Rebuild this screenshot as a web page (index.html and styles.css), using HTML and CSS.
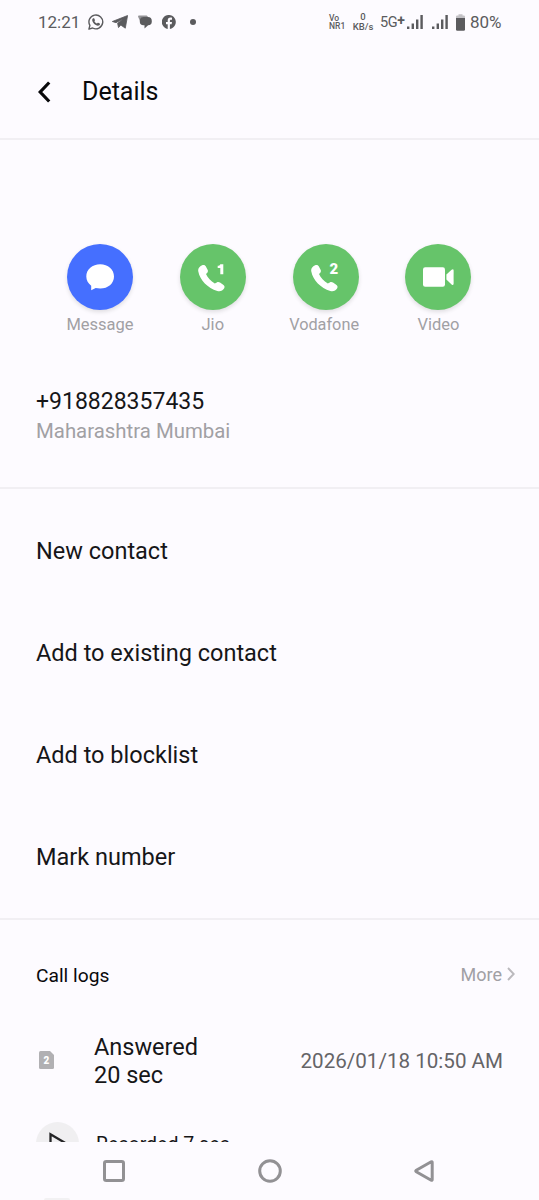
FILE: index.html
```html
<!DOCTYPE html>
<html lang="en">
<head>
<meta charset="utf-8">
<title>Details</title>
<link rel="stylesheet" href="styles.css">
</head>
<body>
<div class="phone">
  <div class="status">
    <span class="clock">12:21</span>
    <svg class="s-wa" width="16" height="16" viewBox="0 0 16 16"><path d="M.9 15.100l1-3.700A6.900 6.900 0 1 1 4.600 14z" fill="none" stroke="currentColor" stroke-width="1.400" stroke-linejoin="round"/><path d="M5.500 4.200c-.5 0-1.300.6-1.300 1.800 0 2.300 3 5.500 5.700 5.800 1.300 0 2.100-.8 2.100-1.700 0-.3-.1-.5-.3-.6L10.200 8.700c-.3-.1-.5 0-.7.3l-.5.6c-.9-.3-2.100-1.400-2.600-2.400l.5-.7c.1-.2.1-.4 0-.6l-.6-1.400c-.1-.2-.4-.3-.8-.3z" fill="currentColor"/></svg>
    <svg class="s-tg" width="16" height="14" viewBox="0 0 16 14"><path d="M15.600.5L13.300 13.200 8.800 10.100 6.500 12.600 5.600 8.300 11.500 3.800 4 7.700.3 6.500z" fill="currentColor" stroke="currentColor" stroke-width=".8" stroke-linejoin="round"/></svg>
    <svg class="s-ms" width="14" height="14" viewBox="0 0 14 14"><path d="M1.200.6h7.500l2 1.900H5.500C3.300 2.500 2.200 4 2 6L.2 2.100C-.1 1.300.3.6 1.200.6z" fill="#939296"/><path d="M5.500 2h4.400a3.900 3.900 0 0 1 3.900 3.900v.5a3.900 3.900 0 0 1-3.700 3.900L6.500 13.500V10.300h-1a3.900 3.900 0 0 1-3.700-3.900v-.5A3.900 3.900 0 0 1 5.500 2z" fill="currentColor"/></svg>
    <svg class="s-fb" width="14" height="14" viewBox="0 0 14 14"><path d="M5.700 13.900V9.200H4V7.100h1.700V5.700c0-2 1-3.100 2.800-3.100.6 0 1.200.1 1.500.2v1.900H9c-.8 0-1.100.4-1.100 1.100v1.300H10l-.4 2.100H7.900v4.700A7 7 0 1 0 5.700 13.900z" fill="currentColor"/></svg>
    <i class="more-dot"></i>
    <div class="stack volte"><span>Vo</span><span>NR1</span></div>
    <div class="stack speed"><span>0</span><span>KB/s</span></div>
    <span class="net">5G<b>+</b></span>
    <svg class="sig sig-a" width="16" height="14" viewBox="0 0 16 14"><path d="M0 11.500h2.400V14H0zM4.600 8.500H7V14H4.600zM9 4.500h2.400V14H9zM13.400 0h2.400v14h-2.400z" fill="currentColor"/></svg>
    <svg class="sig sig-b" width="16" height="14" viewBox="0 0 16 14"><path d="M0 11.500h2.400V14H0zM4.600 8.500H7V14H4.600zM9 4.500h2.400V14H9zM13.400 0h2.400v14h-2.400z" fill="currentColor"/></svg>
    <svg class="bat" width="9" height="17" viewBox="0 0 9 17"><path d="M0 4V2.700Q0 1.500 1.200 1.500H2.500V.3h4v1.200h1.300Q9 1.500 9 2.700V4z" fill="#c3c2c6"/><path d="M0 4h9v11.500q0 1.300-1.300 1.300H1.300Q0 16.800 0 15.500z" fill="currentColor"/></svg>
    <span class="pct">80%</span>
  </div>

  <header class="header">
    <svg width="13" height="22" viewBox="0 0 13 22"><path d="M11.200 1.500L2.200 11l9 9.500" fill="none" stroke="currentColor" stroke-width="3.200"/></svg>
    <h1>Details</h1>
  </header>

  <div class="actions">
    <div class="action">
      <div class="disc blue"><svg width="66" height="66" viewBox="0 0 66 66"><path d="M33.200 20.300c7.800 0 13.800 5.200 13.800 12.200s-6 12.100-13.800 12.100c-1.700 0-3.100-.2-4.500-.5l-4.500 2.100V41.700c-3-2.200-4.900-5.400-4.900-9.200 0-7 6.100-12.200 13.900-12.200z" fill="#fff"/></svg></div>
      <span>Message</span>
    </div>
    <div class="action">
      <div class="disc"><svg width="66" height="66" viewBox="0 0 66 66"><use href="#handset"/><path d="M40.300 20.300h3v10h-3v-6.300h-2.600v-2.200c1.400 0 2.200-.5 2.600-1.500z" fill="#fff"/></svg></div>
      <span>Jio</span>
    </div>
    <div class="action">
      <div class="disc"><svg width="66" height="66" viewBox="0 0 66 66"><path id="handset" d="M22.700 21.100c1-.5 2.300 0 2.900 1l2 3.600c.6 1.100.3 2.300-.5 3.200l-1.100 1.200c1.700 4 4.800 7.100 8.800 9.400l2-1.100c1-.6 2.200-.5 3.200.2l3.500 2.500c1.100.8 1.400 2.100.7 3.200-1.500 2.500-4 3.500-6.900 2.700-9.500-3-17.400-11-19-19.600-.5-2.900 1.500-5.200 4.400-6.300z" fill="#fff"/></svg><b class="sim">2</b></div>
      <span class="voda">Vodafone</span>
    </div>
    <div class="action">
      <div class="disc"><svg width="66" height="66" viewBox="0 0 66 66"><rect x="18" y="23.200" width="22" height="19.600" rx="2.200" fill="#fff"/><path d="M41.400 30.500l5.200-4.800q2-1.400 2 .9v13q0 2.200-2 .8l-5.200-4.800z" fill="#fff"/></svg></div>
      <span>Video</span>
    </div>
  </div>

  <section class="number">
    <div class="tel">+918828357435</div>
    <div class="place">Maharashtra Mumbai</div>
  </section>

  <nav class="menu">
    <div class="item">New contact</div>
    <div class="item">Add to existing contact</div>
    <div class="item">Add to blocklist</div>
    <div class="item">Mark number</div>
  </nav>

  <section class="logs">
    <div class="logs-head">
      <span class="title">Call logs</span>
      <span class="more">More</span>
      <svg class="chev" width="8" height="14" viewBox="0 0 8 14"><path d="M1 1l5.700 6L1 13" fill="none" stroke="#bbb9bd" stroke-width="1.900"/></svg>
    </div>
    <div class="log">
      <svg class="card" width="15" height="18" viewBox="0 0 15 18"><path d="M1.500 0H11l4 4v12.500q0 1.500-1.500 1.500h-12Q0 18 0 16.500v-15Q0 0 1.500 0z" fill="#b1b0b3"/><text x="7.500" y="12.900" text-anchor="middle">2</text></svg>
      <div class="result"><span>Answered</span><span>20 sec</span></div>
      <time>2026/01/18 10:50 AM</time>
    </div>
    <div class="recording">
      <div class="play"><svg width="44" height="44" viewBox="0 0 44 44"><path d="M14.500 12.300v19.400L31 22z" fill="none" stroke="#242426" stroke-width="2.300"/></svg></div>
      <span>Recorded 7 sec</span>
    </div>
  </section>

  <footer class="sysnav">
    <svg width="22" height="22" viewBox="0 0 22 22"><rect x="1.500" y="1.500" width="19" height="19" rx="1.800"/></svg>
    <svg width="24" height="24" viewBox="0 0 24 24"><circle cx="12" cy="12" r="10.300"/></svg>
    <svg width="20" height="22" viewBox="0 0 20 22"><path d="M17.200 1.800Q18.200 1.300 18.200 2.500v17q0 1.200-1 .7L2.300 11.800q-1.200-.8 0-1.600z"/></svg>
    <i class="peek"></i>
  </footer>
</div>
</body>
</html>
```
FILE: styles.css
```css
* { box-sizing: border-box; }
body { margin: 0; background: #fdfbff; font-family: Roboto, "Liberation Sans", sans-serif; color: #161618; }
.phone { width: 539px; height: 1200px; overflow: hidden; display: flex; flex-direction: column; background: #fdfbff; }
.phone > * { flex: none; }
svg { display: block; flex: none; }
span, time, h1 { white-space: nowrap; }

.status { height: 44px; display: flex; align-items: center; padding-left: 38px; color: #5b5b5e; }
.clock { width: 50px; font-size: 17px; }
.s-tg { margin-left: 8px; }
.s-ms { margin-left: 10px; }
.s-fb { margin-left: 10px; }
.more-dot { width: 6px; height: 6px; border-radius: 50%; background: currentColor; margin-left: 14px; }
.stack { display: flex; flex-direction: column; font-weight: 500; }
.volte { width: 17px; margin-left: 133px; font-size: 8.500px; line-height: 8px; }
.speed { width: 22px; margin-left: 6px; align-items: center; font-size: 9.500px; line-height: 10px; }
.net { width: 25px; margin-left: 6px; font-size: 14.500px; letter-spacing: -.4px; }
.net b { font-size: 14px; position: relative; top: -2px; }
.sig-a { margin-left: 2px; }
.sig-b { margin-left: 9px; }
.bat { margin-left: 8px; }
.pct { margin-left: 5px; font-size: 17px; }

.header { height: 96px; display: flex; align-items: center; gap: 31px; padding: 2px 0 0 38px; border-bottom: 2px solid #f1eff3; color: #09090b; }
.header h1 { margin: 0; font-size: 25px; font-weight: 400; line-height: 30px; }

.actions { height: 210px; padding: 104px 44px 0 43.600px; display: flex; }
.action { width: 112.800px; display: flex; flex-direction: column; align-items: center; font-size: 16.500px; line-height: 20px; color: #a1a0a4; }
.action span { margin-top: 5px; }
.action .voda { margin-right: 3px; font-size: 16.300px; }
.disc { position: relative; width: 66px; height: 66px; border-radius: 50%; background: #66c46a; box-shadow: 0 2px 4px rgba(0, 0, 0, .12); }
.disc.blue { background: #456fff; }
.sim { position: absolute; left: 37px; top: 17px; font-size: 15px; line-height: 17px; font-weight: 900; color: #fff; }

.number { height: 139px; padding-top: 37px; border-bottom: 2px solid #f1eff3; padding-left: 36px; }
.tel { font-size: 23px; line-height: 30px; }
.place { font-size: 20.400px; line-height: 28px; color: #a1a0a4; }

.menu { height: 431px; padding: 11px 0 0 36px; border-bottom: 2px solid #f1eff3; }
.item { height: 102px; display: flex; align-items: center; font-size: 23.500px; }

.logs { height: 222px; overflow: hidden; }
.logs-head { height: 110px; display: flex; align-items: center; padding: 0 24px 0 36px; }
.title { font-size: 19.200px; color: #09090b; }
.more { margin-left: auto; margin-right: 5px; margin-bottom: 2px; font-size: 18px; color: #a1a0a4; }
.chev { margin-bottom: 3px; }
.log { height: 62px; display: flex; align-items: center; padding: 0 36px 0 39px; }
.card { margin-top: -3px; }
.card text { font: 900 10px Roboto, sans-serif; fill: #fff; }
.result { margin-left: 40px; display: flex; flex-direction: column; font-size: 23.500px; line-height: 28px; }
.log time { margin-left: auto; margin-bottom: 1px; font-size: 20.600px; color: #656467; }
.recording { margin-top: 30px; display: flex; gap: 17px; padding-left: 36px; font-size: 19.500px; }
.recording span { line-height: 46px; }
.play { width: 43px; height: 44px; border-radius: 50%; background: #f0eff1; }

.sysnav { position: relative; height: 58px; padding: 0 105px 0 103px; display: flex; align-items: center; justify-content: space-between; background: #fdfbff; }
.sysnav svg { fill: none; stroke: #929194; stroke-width: 3; }
.peek { position: absolute; left: 44px; bottom: 0; width: 26px; height: 2px; border-radius: 13px 13px 0 0; background: #f2f1f3; }
```
